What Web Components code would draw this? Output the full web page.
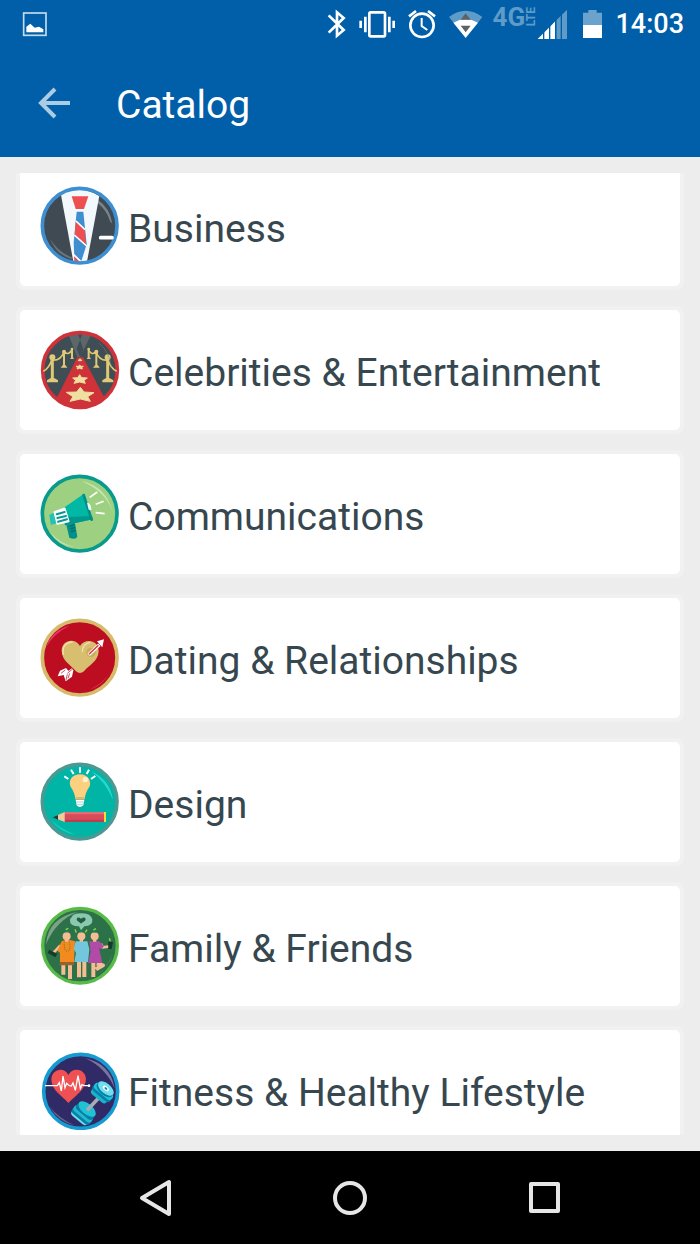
<!DOCTYPE html>
<html lang="en">
<head>
<meta charset="UTF-8">
<meta name="viewport" content="width=device-width, initial-scale=1.0">
<title>Catalog</title>
<style>
  body {
    margin: 0;
    font-family: Roboto, "Noto Sans", sans-serif;
    background: #ededed;
  }
  app-screen {
    --blue: #005fa8;
    --ink: #37474f;
  }
</style>
</head>
<body>
<app-screen>
  <status-bar slot="top" time="14:03"></status-bar>
  <app-toolbar slot="top">Catalog</app-toolbar>
  <category-card icon="business">Business</category-card>
  <category-card icon="celebrities">Celebrities &amp; Entertainment</category-card>
  <category-card icon="communications">Communications</category-card>
  <category-card icon="dating">Dating &amp; Relationships</category-card>
  <category-card icon="design">Design</category-card>
  <category-card icon="family">Family &amp; Friends</category-card>
  <category-card icon="fitness">Fitness &amp; Healthy Lifestyle</category-card>
  <system-nav slot="bottom"></system-nav>
</app-screen>

<script>
class AppScreen extends HTMLElement {
  connectedCallback() {
    this.attachShadow({ mode: 'open' });
    this.shadowRoot.innerHTML = `
      <style>
        :host {
          display: flex;
          flex-direction: column;
          height: 100vh;
        }
        main {
          flex: 1;
          min-height: 0;
          display: flex;
          padding: 16px;
        }
        .list {
          flex: 1;
          display: flex;
          flex-direction: column;
          gap: 16px;
          overflow-y: auto;
          scrollbar-width: none;
        }
      </style>
      <header><slot name="top"></slot></header>
      <main><div class="list"><slot></slot></div></main>
      <slot name="bottom"></slot>
    `;
  }
  scrollList(top) {
    this.shadowRoot.querySelector('.list').scrollTop = top;
  }
}

class StatusBar extends HTMLElement {
  connectedCallback() {
    this.attachShadow({ mode: 'open' });
    this.shadowRoot.innerHTML = `
      <style>
        :host {
          display: flex;
          align-items: center;
          height: 48px;
          padding: 0 16px 0 20px;
          background: var(--blue);
          color: white;
        }
        svg {
          display: block;
          flex: none;
          height: 48px;
        }
        .space { flex: 1; }
        .network {
          box-sizing: border-box;
          display: flex;
          align-items: center;
          width: 49px;
          height: 34px;
          padding: 0 0 14px 4px;
          color: #5f9bc8;
          font-weight: 700;
          font-size: 26px;
          line-height: 20px;
        }
        .lte {
          writing-mode: vertical-rl;
          transform: rotate(180deg);
          font-size: 12px;
          line-height: 12px;
        }
        time {
          margin-left: 4px;
          font-weight: 500;
          font-size: 27px;
          line-height: 48px;
        }
      </style>
      <svg width="30" viewBox="60 0 90 144" aria-label="Screenshot saved">
        <rect x="71" y="39" width="67" height="67" fill="none" stroke="#c4dbec" stroke-width="5"/>
        <path d="M79 97V80L91 71L104 83L117 80L130 88V97Z" fill="#fff"/>
      </svg>
      <span class="space"></span>
      <svg width="28" viewBox="12 0 84 144" aria-label="Bluetooth">
        <path d="M29 46L74 90L54 107V37L74 54L29 98" fill="none" stroke="#fff" stroke-width="8"/>
      </svg>
      <svg width="52" viewBox="96 0 156 144" aria-label="Vibrate">
        <rect x="151" y="37" width="47" height="72" rx="4" fill="none" stroke="#fff" stroke-width="8"/>
        <path d="M139 50V97M211 50V97M125 62V84M224 62V84" stroke="#fff" stroke-width="8"/>
      </svg>
      <svg width="40" viewBox="252 0 120 144" aria-label="Alarm">
        <g fill="none" stroke="#fff" stroke-width="8">
          <circle cx="309" cy="76" r="35"/>
          <path d="M270 49L291 33M348 49L327 33"/>
          <path d="M308 54V78L325 90" stroke-width="6"/>
        </g>
      </svg>
      <svg width="45" viewBox="372 0 135 144" aria-label="Wi-Fi">
        <path d="M390 51Q440 13 490 51L476 69Q440 48 404 69Z" fill="#5f9bc8"/>
        <path d="M403 68Q440 48 477 68L440 114Z" fill="#fff"/>
        <path d="M440 40L455 59H425ZM425 77H455L440 97Z" fill="#5c6266"/>
      </svg>
      <span class="network"><span>4G</span><span class="lte">LTE</span></span>
      <svg width="38" viewBox="651 0 114 144" aria-label="Signal strength">
        <path d="M653 117L706 64V117Z" fill="#fff"/>
        <path d="M709 61L741 29V117H709Z" fill="#5f9bc8"/>
        <path d="M671 90V117M689 75V117M707 50V117M724 40V117" stroke="#005fa8" stroke-width="4"/>
      </svg>
      <svg width="36" viewBox="765 0 108 144" aria-label="Battery">
        <path d="M789 76V38H805V30H830V38H846V76Z" fill="#6ba3cd"/>
        <path d="M789 75H846V114H789Z" fill="#fff"/>
      </svg>
      <time>${this.getAttribute('time')}</time>
    `;
  }
}

class AppToolbar extends HTMLElement {
  connectedCallback() {
    this.attachShadow({ mode: 'open' });
    this.shadowRoot.innerHTML = `
      <style>
        :host {
          display: flex;
          align-items: center;
          height: 109px;
          background: var(--blue);
          color: white;
        }
        button {
          width: 116px;
          height: 64px;
          padding: 0 0 0 32px;
          border: 0;
          background: none;
        }
        svg { display: block; }
        h1 {
          margin: 0;
          padding-top: 4px;
          font-weight: 400;
          font-size: 39px;
          line-height: 48px;
        }
      </style>
      <button type="button" aria-label="Back">
        <svg width="44" height="44" viewBox="0 0 44 44">
          <path d="M38 22H9M23 8L9 22L23 36" fill="none" stroke="#acccE4" stroke-width="4"/>
        </svg>
      </button>
      <h1><slot></slot></h1>
    `;
  }
}

const categoryIcons = {
  business: `
    <circle cx="149" cy="149" r="113" fill="#3f4a52"/>
    <path d="M204 72Q240 96 247 143L240 136Q232 104 202 80Z" fill="#79838a"/>
    <path d="M60 188Q84 228 128 245L124 249Q78 236 60 188Z" fill="#68737a"/>
    <path d="M92 52Q149 24 208 60L170 262H131Z" fill="#f3f8fc"/>
    <path d="M125 61H175L162 99H137Z" fill="#ef4e50"/>
    <path d="M140 107H160L170 205L152 262H134L131 200Z" fill="#3f8fd0"/>
    <path d="M137 137L164 160L169 209L134 178Z" fill="#ef4e50"/>
    <path d="M132 238L155 262H134Z" fill="#ef4e50"/>
    <path d="M138 135L165 161M133 177L170 210M131 236L155 259" stroke="#fff" stroke-width="5"/>
    <circle cx="149" cy="149" r="112" fill="none" stroke="#3e8fd1" stroke-width="11"/>
    <path d="M212 185H246" stroke="#fff" stroke-width="11" stroke-linecap="round"/>`,
  celebrities: `
    <circle cx="150" cy="150" r="112" fill="#3f4d54"/>
    <path d="M116 45L143 38L160 88L151 112H142ZM183 45L158 40L140 86L150 112Z" fill="#7e8784" opacity=".45"/>
    <path d="M142 112H159L224 234Q150 300 80 234Z" fill="#cf3339"/>
    <circle cx="150" cy="150" r="112" fill="none" stroke="#cf3339" stroke-width="11"/>
    <g fill="none" stroke="#dfc873" stroke-width="5">
      <path d="M40 154Q58 144 65 120Q91 124 102 96Q118 108 126 88M260 154Q241 144 234 120Q209 124 198 96Q182 108 175 88"/>
      <path d="M67 116V180M233 116V180" stroke-width="9"/>
      <path d="M102 96V138M199 96V138M126 88V113M176 88V113" stroke-width="6"/>
    </g>
    <g fill="#e0ca7a">
      <circle cx="67" cy="112" r="9"/><circle cx="233" cy="112" r="9"/>
      <circle cx="102" cy="95" r="6"/><circle cx="199" cy="95" r="6"/>
      <circle cx="126" cy="87" r="4"/><circle cx="176" cy="87" r="4"/>
      <path d="M51 187V181L61 175H74L84 181V187ZM217 187V181L227 175H240L250 181V187Z"/>
      <path d="M92 143L98 136H107L112 143ZM189 143L195 136H204L209 143ZM120 117L124 112H129L132 117ZM170 117L174 112H179L183 117Z"/>
    </g>
    <g fill="#ede0a1" stroke="#ede0a1" stroke-width="3" stroke-linejoin="round">
      <path d="M151 202L162 216L192 218L173 230L181 244L151 237L120 244L129 230L109 217L140 216Z"/>
      <path d="M149 164L155 173L172 174L162 181L166 190L149 186L132 190L137 181L128 174L143 173Z"/>
      <path d="M149 135L153 139L160 139L155 143L157 147L149 145L141 147L143 143L138 139L145 139Z"/>
      <path d="M150 116L153 119L155 122H145L147 119Z"/>
    </g>
    <path d="M208 70Q239 96 244 142" fill="none" stroke="#78817f" stroke-width="3" opacity=".5"/>`,
  communications: `
    <circle cx="149" cy="149" r="112" fill="#9ed081"/>
    <path d="M154 51Q231 68 249 149Q232 84 154 51Z" fill="#c9e6b9"/>
    <path d="M61 205Q92 241 136 249Q86 247 61 205Z" fill="#c3e2af"/>
    <path d="M107 174L133 166L142 218Q137 229 118 221Z" fill="#018f89"/>
    <path d="M119 187L133 182M121 195L135 190M123 203L136 199" stroke="#036b6c" stroke-width="4"/>
    <path d="M96 135L160 91L188 166L105 184Z" fill="#00b8a4"/>
    <path d="M104 160L186 156L188 166L105 184Z" fill="#01978d"/>
    <path d="M161 93L185 167" stroke="#018f89" stroke-width="8" stroke-linecap="round"/>
    <path d="M171 116Q184 117 184 139L176 137Z" fill="#eafaff"/>
    <path d="M60 154L72 148L79 176L64 180Z" fill="#24c1b4" stroke="#24c1b4" stroke-width="4" stroke-linejoin="round"/>
    <path d="M73 144L104 133L116 172L82 180Z" fill="#fff" stroke="#fff" stroke-width="5" stroke-linejoin="round"/>
    <path d="M80 151L104 144M82 162L108 156M84 173L111 166" stroke="#079a90" stroke-width="6" stroke-linecap="round"/>
    <path d="M179 100L202 84M197 121L221 112M197 146L224 149" stroke="#fff" stroke-width="5"/>
    <circle cx="149" cy="149" r="112" fill="none" stroke="#079a8d" stroke-width="11"/>`,
  dating: `
    <circle cx="149" cy="149" r="112" fill="#bd0d20"/>
    <path d="M49 116Q66 66 119 53Q73 75 49 116Z" fill="#e7366b"/>
    <path d="M180 244Q228 230 243 178Q232 222 180 244Z" fill="#e7446b"/>
    <path d="M138 190C125 172 96 160 95 128C95 95 136 88 150 114C164 90 206 94 206 130C205 160 176 172 162 190Q150 200 138 190Z" fill="#d8bf70"/>
    <path d="M100 139Q94 107 126 102" fill="none" stroke="#f0e2b0" stroke-width="4" stroke-linecap="round"/>
    <path d="M157 132Q157 107 181 103" fill="none" stroke="#f0e2b0" stroke-width="4"/>
    <circle cx="183" cy="133" r="14" fill="#c9ab58"/>
    <path d="M176 140L208 110" stroke="#fff" stroke-width="10"/>
    <path d="M177 139L205 112" stroke="#d33343" stroke-width="4"/>
    <path d="M201 100L222 94L217 118Z" fill="#fff"/>
    <path d="M128 184L104 203" stroke="#fff" stroke-width="8"/>
    <path d="M108 180L90 188L83 205L101 201L107 220L126 206L130 187L116 190Z" fill="#fff"/>
    <path d="M106 186L93 196M112 199L108 216M119 196L114 211M112 196L130 181" stroke="#c65a61" stroke-width="3"/>
    <circle cx="149" cy="149" r="112" fill="none" stroke="#d6bb6b" stroke-width="11"/>`,
  design: `
    <circle cx="149" cy="149" r="112" fill="#00b5a5"/>
    <path d="M185 59Q239 81 249 143Q226 89 185 59Z" fill="#26d8ca"/>
    <path d="M61 202Q90 241 137 249Q88 229 61 202Z" fill="#18d0c0"/>
    <path d="M150 67C174 67 185 87 179 103Q165 124 164 141H136Q135 124 121 103C115 83 128 67 150 67Z" fill="#fbd080"/>
    <circle cx="166" cy="83" r="8" fill="#fff0c9"/>
    <path d="M136 135H164V142H136Z" fill="#eeb35e"/>
    <path d="M137 143H163L160 160Q149 170 140 160Z" fill="#fff"/>
    <path d="M138 150H162M139 157H161" stroke="#a8d9d2" stroke-width="3"/>
    <path d="M103 73L115 81M123 53L131 66M150 46V62M177 53L170 66M196 72L183 81" stroke="#fff" stroke-width="6"/>
    <path d="M103 180H224V210H103Z" fill="#d84b5a"/>
    <path d="M103 180H224V187H103Z" fill="#e36b75"/>
    <path d="M103 203H224V210H103Z" fill="#bd3d4e"/>
    <path d="M104 180V210L69 196Z" fill="#f4cb96"/>
    <path d="M84 189V203L68 196Z" fill="#29353b"/>
    <path d="M222 180H228V210H222Z" fill="#ffd83a"/>
    <circle cx="149" cy="149" r="112" fill="none" stroke="#4c9993" stroke-width="11"/>`,
  family: `
    <circle cx="150" cy="149" r="112" fill="#2d7149"/>
    <path d="M48 145Q53 65 144 47Q78 73 48 145Z" fill="#7ea286"/>
    <path d="M201 236Q238 211 246 176Q232 218 201 236Z" fill="#7ea286"/>
    <path d="M125 64Q128 52 154 52Q182 51 187 70Q190 90 163 91L153 103L147 91Q118 91 120 73Q119 68 125 64Z" fill="#8bc8b0"/>
    <path d="M153 83C149 78 140 76 140 69Q143 61 153 68Q164 61 167 69C167 76 158 78 153 83Z" fill="#245d3e"/>
    <g fill="none" stroke="#f4bd93" stroke-width="12">
      <path d="M100 200V236M120 200V249M147 195V244M163 195V243M190 200V243M200 203L219 208L198 220" stroke-linejoin="round"/>
      <path d="M91 148L71 170M213 144L219 154L240 151" stroke-width="8"/>
    </g>
    <path d="M95 136Q111 128 135 136L132 202H90V170L82 164Z" fill="#f28a20"/>
    <path d="M90 198H132V208H88Z" fill="#99612d"/>
    <path d="M137 136H172L178 160L174 198H133L138 171L131 158Z" fill="#72c7df"/>
    <path d="M178 136H207L222 150L214 160L207 155L217 201H174L182 168Z" fill="#b24aa7"/>
    <g fill="#f4bd93">
      <circle cx="110" cy="121" r="12"/><circle cx="154" cy="121" r="12"/><circle cx="194" cy="121" r="12"/>
      <path d="M105 129H115V137H105ZM149 129H159V137H149ZM189 129H199V137H189Z"/>
    </g>
    <path d="M103 137Q101 165 112 166Q124 163 118 137" fill="none" stroke="#7b7a25" stroke-width="3" stroke-dasharray="4 3"/>
    <path d="M57 161L82 173L76 184L53 171ZM234 137L249 138L245 159H235Z" fill="#143c2c"/>
    <path d="M104 109L109 98L118 108ZM148 109L152 101L161 109ZM187 109L193 100L200 110Z" fill="#128a55"/>
    <path d="M107 101L115 97M139 110L135 100M166 109L171 101M190 102L198 98M241 136L238 127" stroke="#8dd64e" stroke-width="4"/>
    <circle cx="150" cy="149" r="112" fill="none" stroke="#59bb47" stroke-width="10"/>`,
  fitness: `
    <g transform="translate(0 6)">
      <circle cx="152" cy="148" r="112" fill="#302b66"/>
      <path d="M166 49Q242 65 254 139Q226 76 166 49Z" fill="#77749e"/>
      <path d="M59 194Q85 239 134 250Q88 230 59 194Z" fill="#68658f"/>
      <path d="M115 183C96 161 64 145 64 112C65 80 104 73 115 99C127 73 167 80 168 111C167 145 134 162 115 183Z" fill="#ef5051"/>
      <circle cx="152" cy="148" r="111" fill="none" stroke="#159bd2" stroke-width="11"/>
      <path d="M45 131H82L88 122L94 147L99 102L105 137L110 124L118 131L124 132L129 123L136 145L144 101L151 139L156 128L163 131H177" fill="none" stroke="#fff" stroke-width="4"/>
      <circle cx="177" cy="131" r="4" fill="#fff"/>
      <path d="M170 206L208 166" stroke="#a6adb5" stroke-width="11"/>
      <g transform="rotate(40 218 151)">
        <rect x="188" y="156" width="58" height="20" rx="10" fill="#19b4cc"/>
        <rect x="184" y="144" width="68" height="22" rx="11" fill="#087fa6"/>
        <rect x="184" y="136" width="68" height="22" rx="11" fill="#20c2d6"/>
        <ellipse cx="218" cy="141" rx="29" ry="16" fill="#087fa6"/>
        <ellipse cx="218" cy="136" rx="28" ry="15" fill="#6ddff0"/>
        <ellipse cx="218" cy="136" rx="11" ry="6" fill="#fff"/>
        <ellipse cx="218" cy="136" rx="5" ry="3" fill="#1686aa"/>
      </g>
      <g transform="rotate(40 163 211)">
        <rect x="132" y="220" width="60" height="22" rx="11" fill="#6ddff0"/>
        <rect x="129" y="213" width="68" height="23" rx="11" fill="#087fa6"/>
        <rect x="129" y="206" width="68" height="22" rx="11" fill="#20bad0"/>
        <rect x="131" y="196" width="64" height="23" rx="11" fill="#087fa6"/>
        <ellipse cx="163" cy="198" rx="31" ry="16" fill="#21c2d4"/>
      </g>
      <path d="M171 205L184 191" stroke="#a6adb5" stroke-width="11"/>
    </g>`
};

class CategoryCard extends HTMLElement {
  connectedCallback() {
    this.attachShadow({ mode: 'open' });
    const icon = this.getAttribute('icon');
    this.shadowRoot.innerHTML = `
      <style>
        :host {
          display: block;
          flex: none;
          border: 4px solid #f1f1f1;
          border-radius: 8px;
          background: #f1f1f1;
        }
        a {
          display: flex;
          align-items: center;
          gap: 8px;
          height: 120px;
          padding: 0 20px;
          border-radius: 5px;
          background: white;
          color: var(--ink);
          text-decoration: none;
        }
        svg {
          display: block;
          flex: none;
        }
        .label {
          padding-top: 5px;
          font-size: 39px;
          line-height: 48px;
        }
      </style>
      <a href="#${icon}">
        <svg width="80" height="80" viewBox="30 30 240 240" aria-hidden="true">${categoryIcons[icon]}</svg>
        <span class="label"><slot></slot></span>
      </a>
    `;
  }
}

class SystemNav extends HTMLElement {
  connectedCallback() {
    this.attachShadow({ mode: 'open' });
    this.shadowRoot.innerHTML = `
      <style>
        :host {
          display: block;
          background: black;
        }
        nav {
          display: grid;
          grid-template-columns: repeat(3, 1fr);
          height: 93px;
          padding: 0 56px;
        }
        button {
          display: grid;
          place-items: center;
          padding: 0;
          border: 0;
          background: none;
        }
        svg {
          fill: none;
          stroke: #e6e6e6;
          stroke-width: 4;
          stroke-linejoin: round;
        }
      </style>
      <nav>
        <button type="button" aria-label="Back">
          <svg width="40" height="40" viewBox="0 0 40 40"><path d="M35 4V36L8 20Z"/></svg>
        </button>
        <button type="button" aria-label="Home">
          <svg width="40" height="40" viewBox="0 0 40 40"><circle cx="20" cy="20" r="15"/></svg>
        </button>
        <button type="button" aria-label="Recent apps">
          <svg width="40" height="40" viewBox="0 0 40 40"><rect x="5" y="6" width="27" height="27"/></svg>
        </button>
      </nav>
    `;
  }
}

customElements.define('status-bar', StatusBar);
customElements.define('app-toolbar', AppToolbar);
customElements.define('category-card', CategoryCard);
customElements.define('system-nav', SystemNav);
customElements.define('app-screen', AppScreen);

// the list opens slightly scrolled
document.querySelector('app-screen').scrollList(11);
</script>
</body>
</html>
